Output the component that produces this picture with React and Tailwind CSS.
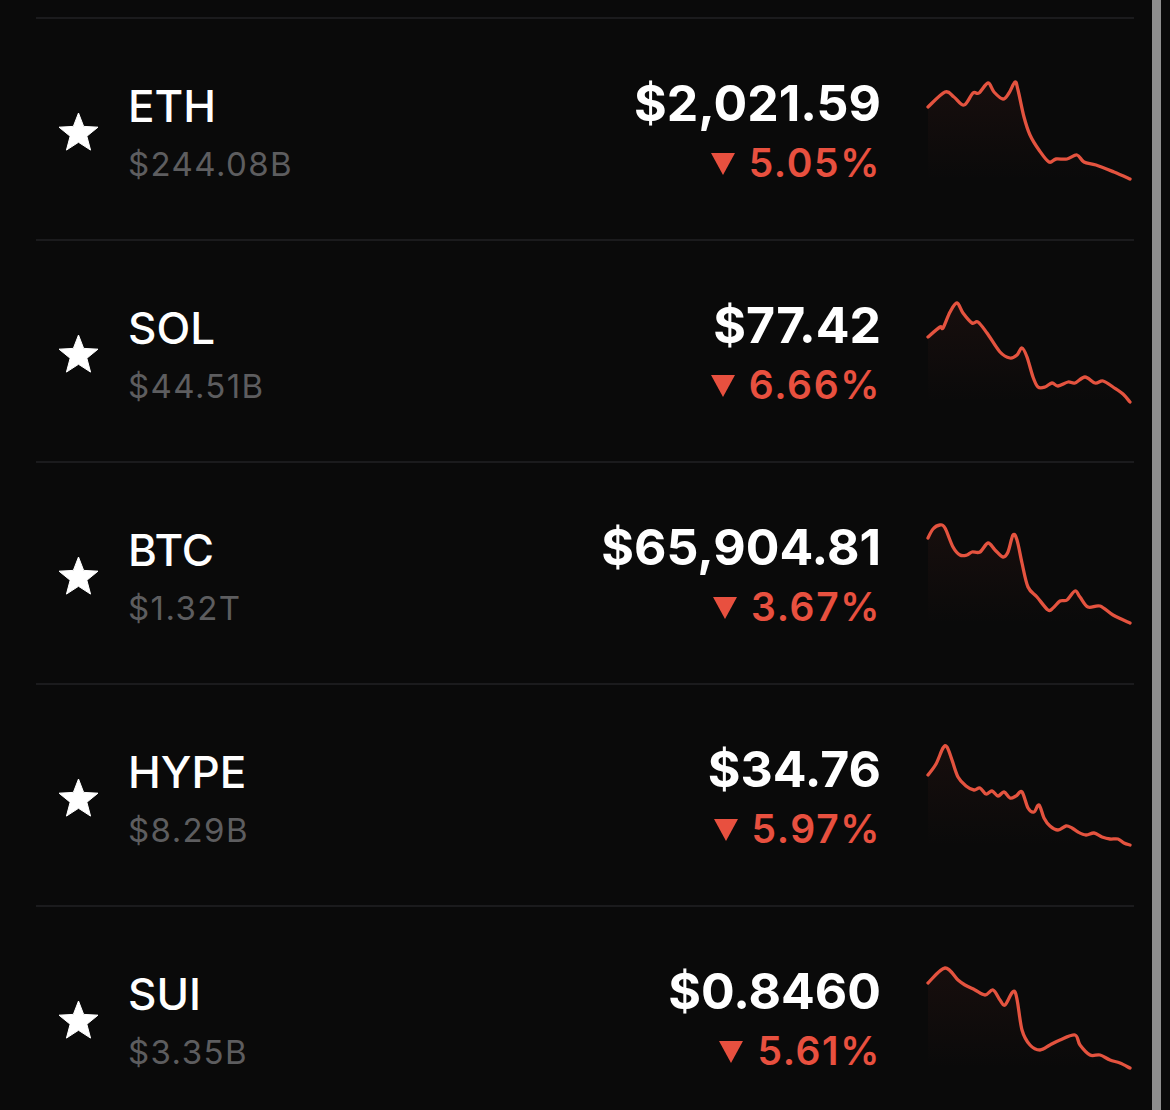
const coins = [
  {
    symbol: "ETH",
    cap: "$244.08B",
    price: "$2,021.59",
    change: "5.05%",
    spark: [[0,31],[17,16],[26,21],[36,29],[45,17],[51,17],[60,7],[66,16],[75,23],[81,17],[87,6],[90,14],[96,41],[102,59],[111,74],[121,86],[128,83],[139,83],[149,79],[156,86],[168,89],[186,96],[202,103]],
  },
  {
    symbol: "SOL",
    cap: "$44.51B",
    price: "$77.42",
    change: "6.66%",
    spark: [[0,39],[12,29],[15,30],[22,14],[29,5],[35,15],[44,25],[50,24],[59,35],[72,54],[82,60],[89,57],[94,50],[99,59],[105,79],[110,89],[117,89],[124,85],[130,88],[140,84],[147,85],[157,79],[167,85],[175,83],[185,89],[195,96],[202,104]],
  },
  {
    symbol: "BTC",
    cap: "$1.32T",
    price: "$65,904.81",
    change: "3.67%",
    spark: [[0,18],[5,9],[12,5],[17,8],[25,27],[32,35],[39,35],[44,32],[52,32],[60,23],[67,30],[75,37],[80,32],[85,15],[89,20],[94,43],[100,67],[109,77],[120,90],[125,88],[132,81],[139,80],[147,71],[152,77],[160,87],[172,86],[185,95],[202,103]],
  },
  {
    symbol: "HYPE",
    cap: "$8.29B",
    price: "$34.76",
    change: "5.97%",
    spark: [[0,33],[8,22],[15,6],[19,5],[24,18],[30,35],[38,44],[46,48],[52,46],[58,52],[64,49],[70,54],[76,50],[82,56],[88,54],[94,50],[100,66],[106,70],[111,63],[116,76],[122,84],[130,88],[138,84],[144,86],[150,90],[158,93],[166,91],[174,95],[182,97],[190,97],[196,101],[202,103]],
  },
  {
    symbol: "SUI",
    cap: "$3.35B",
    price: "$0.8460",
    change: "5.61%",
    spark: [[0,19],[17,4],[30,16],[37,21],[47,26],[57,31],[65,26],[72,36],[77,41],[87,28],[94,66],[102,81],[112,86],[122,81],[132,76],[147,71],[152,81],[162,91],[172,91],[182,96],[192,99],[202,104]],
  },
];

function smoothPath(pts) {
  let d = `M${pts[0][0]},${pts[0][1]}`;
  for (let i = 0; i < pts.length - 1; i++) {
    const p0 = pts[i - 1] || pts[i];
    const p1 = pts[i];
    const p2 = pts[i + 1];
    const p3 = pts[i + 2] || p2;
    const c1x = p1[0] + (p2[0] - p0[0]) / 6;
    const c1y = p1[1] + (p2[1] - p0[1]) / 6;
    const c2x = p2[0] - (p3[0] - p1[0]) / 6;
    const c2y = p2[1] - (p3[1] - p1[1]) / 6;
    d += ` C${c1x.toFixed(1)},${c1y.toFixed(1)} ${c2x.toFixed(1)},${c2y.toFixed(1)} ${p2[0]},${p2[1]}`;
  }
  return d;
}

function Star() {
  const R = 20.5;
  const r = 8.8;
  const cx = 20.5;
  const cy = 20.5;
  const pts = [];
  for (let i = 0; i < 10; i++) {
    const rad = i % 2 === 0 ? R : r;
    const a = (Math.PI / 5) * i - Math.PI / 2;
    pts.push(`${(cx + rad * Math.cos(a)).toFixed(2)},${(cy + rad * Math.sin(a)).toFixed(2)}`);
  }
  return (
    <svg width="41" height="38" viewBox="0 0 41 38">
      <polygon points={pts.join(" ")} fill="#ffffff" strokeLinejoin="round" stroke="#ffffff" strokeWidth="1" />
    </svg>
  );
}

function Sparkline({ points, id }) {
  const d = smoothPath(points);
  const last = points[points.length - 1];
  const area = `${d} L${last[0]},104 L${points[0][0]},104 Z`;
  return (
    <svg width="205" height="108" viewBox="0 0 205 108" className="overflow-visible">
      <defs>
        <linearGradient id={id} x1="0" y1="0" x2="0" y2="1">
          <stop offset="0%" stopColor="#e8503f" stopOpacity="0.06" />
          <stop offset="100%" stopColor="#e8503f" stopOpacity="0" />
        </linearGradient>
      </defs>
      <path d={area} fill={`url(#${id})`} />
      <path d={d} fill="none" stroke="#e4533f" strokeWidth="3.3" strokeLinecap="round" strokeLinejoin="round" />
    </svg>
  );
}

function CoinRow({ coin }) {
  return (
    <div>
      <div className="h-[2px] bg-[#1b1b1d]" />
      <div className="h-[220px] flex items-center">
        <div className="w-[92px] pl-[22px] pt-[6px] shrink-0">
          <Star />
        </div>
        <div className="flex-1 pt-[6px]">
          <div className="text-[44px] leading-[52px] font-medium text-white">{coin.symbol}</div>
          <div className="mt-[12px] text-[33px] leading-[40px] tracking-[1.4px] text-[#5d5d5f]">{coin.cap}</div>
        </div>
        <div className="flex flex-col items-end">
          <div className="text-[50px] leading-[58px] font-bold text-white">{coin.price}</div>
          <div className="mt-[10px] flex items-center text-[39px] leading-[42px] font-semibold tracking-[1.6px] text-[#e8503f]">
            <svg width="24" height="22" viewBox="0 0 24 22" className="mr-[14px] mt-[2px]">
              <polygon points="0,0 24,0 12,22" fill="#e8503f" />
            </svg>
            <span>{coin.change}</span>
          </div>
        </div>
        <div className="ml-[47px] mr-[1px] pt-[2px]">
          <Sparkline points={coin.spark} id={`grad-${coin.symbol}`} />
        </div>
      </div>
    </div>
  );
}

export default function App() {
  return (
    <div className="h-[1110px] w-[1170px] overflow-hidden bg-[#0a0a0a] flex" style={{ fontFamily: "Inter, 'Noto Sans', sans-serif" }}>
      <div className="w-[1152px] pl-[36px] pr-[18px] pt-[17px]">
        {coins.map((coin) => (
          <CoinRow key={coin.symbol} coin={coin} />
        ))}
      </div>
      <div className="w-[9px] h-full bg-[#8e8e8e]" />
      <div className="w-[9px]" />
    </div>
  );
}
